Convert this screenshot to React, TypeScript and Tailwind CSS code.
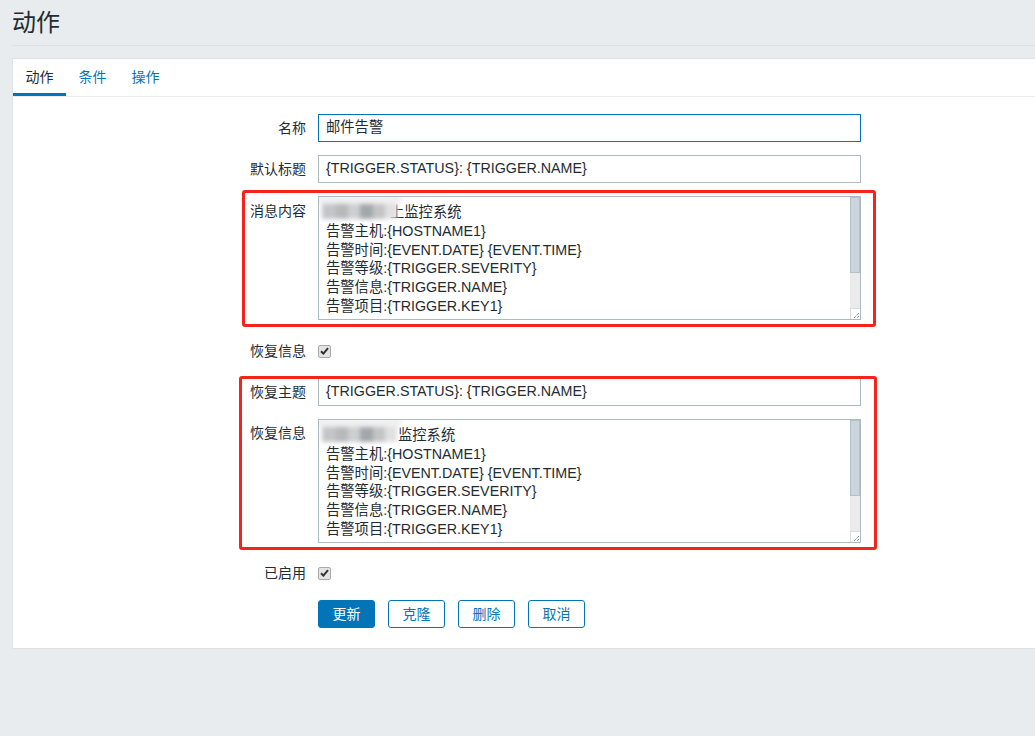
import React from "react";

const lines = [
  "告警主机:{HOSTNAME1}",
  "告警时间:{EVENT.DATE} {EVENT.TIME}",
  "告警等级:{TRIGGER.SEVERITY}",
  "告警信息:{TRIGGER.NAME}",
  "告警项目:{TRIGGER.KEY1}",
];

const Check = () => (
  <span className="flex h-[13px] w-[13px] items-center justify-center rounded-[2px] border border-[#a9a9a9] bg-[#e4e4e4]">
    <svg width="9" height="8" viewBox="0 0 9 8">
      <path d="M1 4.2 L3.4 6.6 L8 1.2" fill="none" stroke="#333" strokeWidth="2" />
    </svg>
  </span>
);

// blurred-out part of the first line
const Blur = ({ reserve, partial }: { reserve: number; partial?: boolean }) => (
  <>
    <span className="relative inline-block h-[18px]" style={{ width: reserve }}>
      <span className="absolute -left-[12px] -top-[8px] flex h-[27px] w-[88px] flex-col blur-[2px]">
        <span className="h-[9px] w-full rounded-full bg-[#f0f0f0]" />
        <span className="flex h-[15px] pl-[8px]">
          <span className="w-[14px] bg-[#c4c5c7]" />
          <span className="w-[12px] bg-[#b6b8bb]" />
          <span className="w-[12px] bg-[#cdcfd1]" />
          <span className="w-[13px] bg-[#a3a7ab]" />
          <span className="w-[12px] bg-[#c3c4c6]" />
          <span className="w-[12px] bg-[#e0e0e1]" />
        </span>
      </span>
    </span>
    {partial ? "上" : ""}监控系统
  </>
);

function TextBox({ reserve, partial }: { reserve: number; partial?: boolean }) {
  return (
    <div className="flex h-[124px] w-[543px] border border-[#acbbc2] bg-white">
      <div className="flex-1 overflow-hidden pl-[7px] pt-[6px] text-[14.3px] leading-[18.8px] text-[#1f2c33]">
        <div className="flex h-[18.8px] items-center whitespace-pre">
          <Blur reserve={reserve} partial={partial} />
        </div>
        {lines.map((l) => (
          <div key={l} className="whitespace-pre">{l}</div>
        ))}
      </div>
      <div className="flex w-[10px] flex-col">
        <div className="h-[76px] border border-[#b3c0c7] bg-[#cbd5db]" />
        <div className="flex-1 bg-[#ebebeb]" />
        <div className="flex h-[11px] items-end justify-end border-l border-t border-[#dcdcdc] bg-white">
          <svg width="7" height="7" viewBox="0 0 7 7">
            <path d="M6 1 L1 6 M6 4 L4 6" stroke="#555" strokeWidth="1" strokeDasharray="1 1" />
          </svg>
        </div>
      </div>
    </div>
  );
}

const Input = ({ value, active }: { value: string; active?: boolean }) => (
  <div
    className={
      "flex h-[28px] w-[543px] items-center border bg-white pl-[7px] text-[14.3px] text-[#1f2c33] " +
      (active ? "border-[#0275b8]" : "border-[#acbbc2]")
    }
  >
    {value}
  </div>
);

export default function App() {
  return (
    <div className="min-h-[736px] overflow-hidden bg-[#e9ecef] font-['Liberation_Sans','Noto_Sans_CJK_SC',sans-serif] text-[#1f2c33]">
      <div className="ml-3 h-[46px] border-b border-[#dde1e4] pt-[8px] text-[24px] leading-[30px]">动作</div>

      <div className="ml-3 mt-3 w-[1040px] border border-[#dde2e6] bg-white pb-[20px]">
        {/* tabs */}
        <div className="flex h-[38px] border-b border-[#ebeef0] text-[14px]">
          <div className="flex h-[37px] w-[53px] items-center justify-center border-b-[3px] border-[#0275b8] pt-[3px]">动作</div>
          <div className="flex h-[37px] w-[53px] items-center justify-center text-[#0275b8]">条件</div>
          <div className="flex h-[37px] w-[53px] items-center justify-center text-[#0275b8]">操作</div>
        </div>

        <div className="flex flex-col text-[14px]">
          <div className="mt-[17px] flex items-center">
            <div className="w-[293px] text-right">名称</div>
            <div className="ml-3"><Input value="邮件告警" active /></div>
          </div>
          <div className="mt-[13px] flex items-center">
            <div className="w-[293px] text-right">默认标题</div>
            <div className="ml-3"><Input value="{TRIGGER.STATUS}: {TRIGGER.NAME}" /></div>
          </div>

          <div className="ml-[229px] mt-[7px] w-[634px] rounded-[3px] border-[3px] border-[#f4231c] pb-[4px] pt-[3px]">
            <div className="flex items-start">
              <div className="w-[61px] pt-[6px] text-right leading-[18px]">消息内容</div>
              <div className="ml-3"><TextBox reserve={64} partial /></div>
            </div>
          </div>

          <div className="mt-[10px] flex h-[28px] items-center">
            <div className="w-[293px] text-right">恢复信息</div>
            <div className="ml-3"><Check /></div>
          </div>

          <div className="ml-[226px] mt-[11px] w-[638px] rounded-[3px] border-[3px] border-[#f4231c] pb-[4px]">
            <div className="flex items-center">
              <div className="w-[64px] text-right">恢复主题</div>
              <div className="ml-3">
                <div className="flex h-[27px] w-[543px] items-center border border-t-0 border-[#acbbc2] bg-white pl-[7px] text-[14.3px]">
                  {"{TRIGGER.STATUS}: {TRIGGER.NAME}"}
                </div>
              </div>
            </div>
            <div className="mt-[13px] flex items-start">
              <div className="w-[64px] pt-[5px] text-right leading-[18px]">恢复信息</div>
              <div className="ml-3"><TextBox reserve={72} /></div>
            </div>
          </div>

          <div className="mt-[9px] flex h-[28px] items-center">
            <div className="w-[293px] text-right">已启用</div>
            <div className="ml-3"><Check /></div>
          </div>

          <div className="ml-[305px] mt-[13px] flex gap-[13px]">
            <button className="h-[28px] w-[57px] rounded-[3px] border border-[#0275b8] bg-[#0275b8] text-[14px] text-white">更新</button>
            <button className="h-[28px] w-[57px] rounded-[3px] border border-[#0275b8] bg-white text-[14px] text-[#0275b8]">克隆</button>
            <button className="h-[28px] w-[57px] rounded-[3px] border border-[#0275b8] bg-white text-[14px] text-[#0275b8]">删除</button>
            <button className="h-[28px] w-[57px] rounded-[3px] border border-[#0275b8] bg-white text-[14px] text-[#0275b8]">取消</button>
          </div>
        </div>
      </div>
    </div>
  );
}
